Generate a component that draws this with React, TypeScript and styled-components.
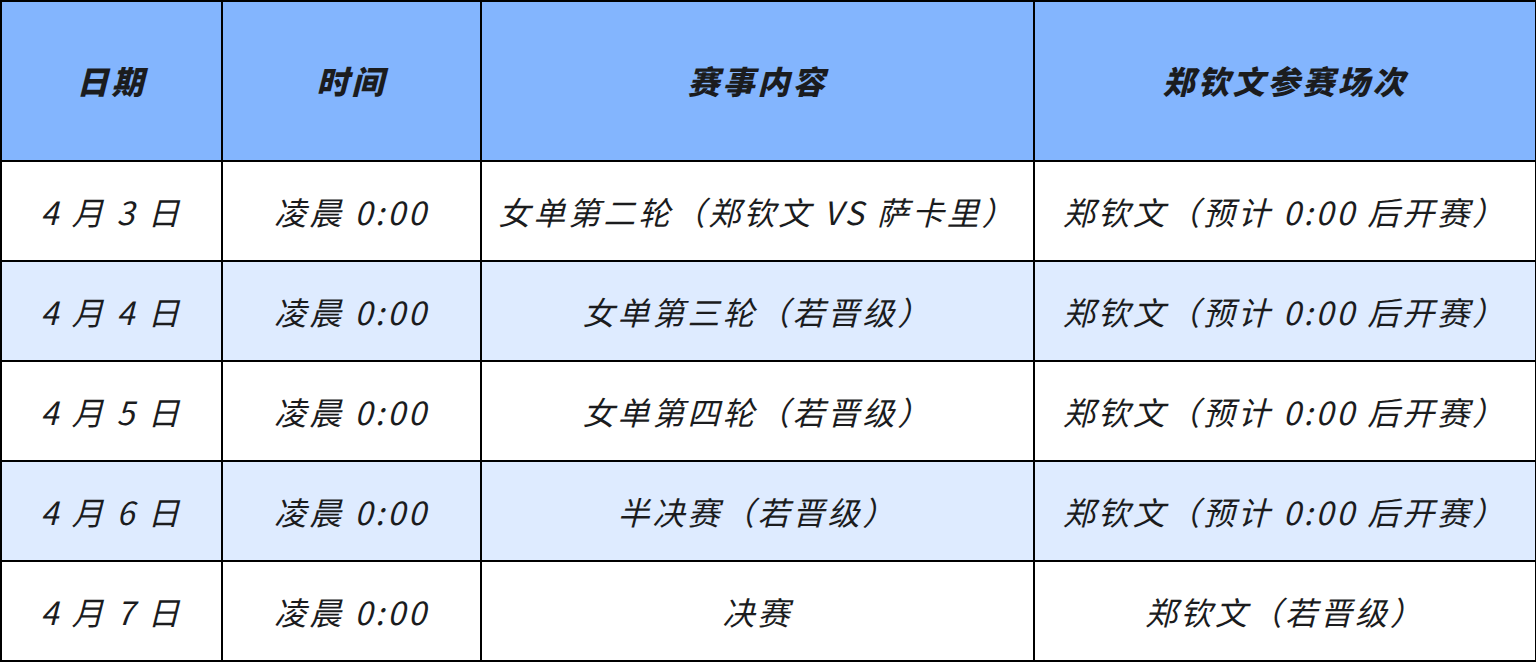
import styled, { createGlobalStyle } from 'styled-components';

const GlobalStyle = createGlobalStyle`
  html, body {
    margin: 0;
    padding: 0;
    background: #ffffff;
  }
  body {
    font-family: "Noto Sans CJK SC", "Noto Sans", sans-serif;
    color: #1b1c1e;
  }
`;

const Table = styled.table`
  width: 1535px;
  border-collapse: collapse;
  table-layout: fixed;
  font-style: italic;
  border: 2px solid #000;
`;

const Col = styled.col<{ $w: number }>`
  width: ${p => p.$w}px;
`;

const HeadRow = styled.tr`
  height: 160px;
  background: #83b5fe;
`;

const Row = styled.tr<{ $alt: boolean }>`
  height: 100px;
  background: ${p => (p.$alt ? '#deebff' : '#ffffff')};
`;

const Th = styled.th`
  border: 2px solid #000;
  font-size: 32px;
  font-weight: 900;
  text-align: center;
  padding: 0 0 2px 0;
  letter-spacing: 3px;
`;

const Td = styled.td`
  border: 2px solid #000;
  font-size: 32px;
  font-weight: 400;
  text-align: center;
  padding: 0;
  white-space: nowrap;
  letter-spacing: 3px;
`;

interface Match {
  date: string;
  time: string;
  event: string;
  session: string;
}

const matches: Match[] = [
  { date: '4 月 3 日', time: '凌晨 0:00', event: '女单第二轮（郑钦文 VS 萨卡里）', session: '郑钦文（预计 0:00 后开赛）' },
  { date: '4 月 4 日', time: '凌晨 0:00', event: '女单第三轮（若晋级）', session: '郑钦文（预计 0:00 后开赛）' },
  { date: '4 月 5 日', time: '凌晨 0:00', event: '女单第四轮（若晋级）', session: '郑钦文（预计 0:00 后开赛）' },
  { date: '4 月 6 日', time: '凌晨 0:00', event: '半决赛（若晋级）', session: '郑钦文（预计 0:00 后开赛）' },
  { date: '4 月 7 日', time: '凌晨 0:00', event: '决赛', session: '郑钦文（若晋级）' },
];

function App() {
  return (
    <>
      <GlobalStyle />
      <Table>
        <colgroup>
          <Col $w={221} />
          <Col $w={259} />
          <Col $w={553} />
          <Col $w={502} />
        </colgroup>
        <thead>
          <HeadRow>
            <Th>日期</Th>
            <Th>时间</Th>
            <Th>赛事内容</Th>
            <Th>郑钦文参赛场次</Th>
          </HeadRow>
        </thead>
        <tbody>
          {matches.map((m, i) => (
            <Row key={m.date} $alt={i % 2 === 1}>
              <Td>{m.date}</Td>
              <Td>{m.time}</Td>
              <Td>{m.event}</Td>
              <Td>{m.session}</Td>
            </Row>
          ))}
        </tbody>
      </Table>
    </>
  );
}

export default App;
